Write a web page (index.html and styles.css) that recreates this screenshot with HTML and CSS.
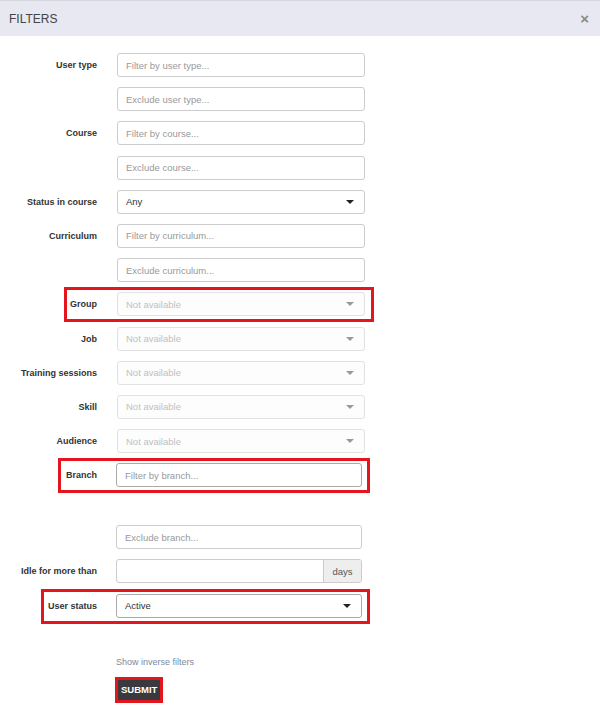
FILE: index.html
```html
<!DOCTYPE html>
<html lang="en">

<head>
    <meta charset="UTF-8">
    <meta name="viewport" content="width=device-width, initial-scale=1.0">
    <title>Filters</title>
    <link rel="stylesheet" href="styles.css">
</head>

<body>
    <div class="modal">
        <div class="modal-head">
            <span class="title">FILTERS</span>
            <span class="close">&times;</span>
        </div>

        <form class="filters">
            <div class="row">
                <label>User type</label>
                <div class="control">Filter by user type...</div>
            </div>
            <div class="row">
                <label></label>
                <div class="control">Exclude user type...</div>
            </div>
            <div class="row">
                <label>Course</label>
                <div class="control">Filter by course...</div>
            </div>
            <div class="row">
                <label></label>
                <div class="control">Exclude course...</div>
            </div>
            <div class="row">
                <label>Status in course</label>
                <div class="control select filled">Any<span class="caret"></span></div>
            </div>
            <div class="row">
                <label>Curriculum</label>
                <div class="control">Filter by curriculum...</div>
            </div>
            <div class="row">
                <label></label>
                <div class="control">Exclude curriculum...</div>
            </div>
            <div class="row marked mark-group">
                <label>Group</label>
                <div class="control select disabled">Not available<span class="caret"></span></div>
            </div>
            <div class="row">
                <label>Job</label>
                <div class="control select disabled">Not available<span class="caret"></span></div>
            </div>
            <div class="row">
                <label>Training sessions</label>
                <div class="control select disabled">Not available<span class="caret"></span></div>
            </div>
            <div class="row">
                <label>Skill</label>
                <div class="control select disabled">Not available<span class="caret"></span></div>
            </div>
            <div class="row">
                <label>Audience</label>
                <div class="control select disabled">Not available<span class="caret"></span></div>
            </div>

            <div class="row shifted marked mark-branch">
                <label>Branch</label>
                <div class="control dark">Filter by branch...</div>
            </div>
            <div class="row shifted spaced">
                <label></label>
                <div class="control">Exclude branch...</div>
            </div>
            <div class="row shifted">
                <label>Idle for more than</label>
                <div class="control group">
                    <span class="field"></span>
                    <span class="addon">days</span>
                </div>
            </div>
            <div class="row shifted marked mark-status">
                <label>User status</label>
                <div class="control select filled dark">Active<span class="caret"></span></div>
            </div>

            <div class="actions">
                <a class="inverse">Show inverse filters</a>
                <span class="submit-wrap">
                    <button type="button" class="submit">SUBMIT</button>
                </span>
            </div>
        </form>
    </div>
</body>

</html>
```

FILE: styles.css
```css
* {
    margin: 0;
    padding: 0;
    box-sizing: border-box;
}

body {
    font-family: "Liberation Sans", Arial, sans-serif;
    background-color: #fff;
    color: #333;
}

.modal {
    width: 600px;
}

.modal-head {
    height: 36px;
    background-color: #e8e8f2;
    border-top: 1px solid #d6d6de;
    display: flex;
    align-items: center;
    justify-content: space-between;
    padding: 0 9px 0 9px;
}

.title {
    font-size: 12px;
    color: #444;
}

.close {
    font-size: 15px;
    font-weight: bold;
    color: #888;
    margin-right: 2px;
}

.filters {
    padding-top: 17px;
}

.row {
    display: flex;
    align-items: center;
    width: 365px;
    height: 24px;
    margin-bottom: 10.2px;
    position: relative;
}

.row label {
    width: 97px;
    text-align: right;
    font-size: 9px;
    font-weight: bold;
    color: #333;
    margin-right: 20px;
}

.control {
    width: 248px;
    height: 24px;
    border: 1px solid #ccc;
    border-radius: 3px;
    font-size: 9.5px;
    color: #999;
    padding-left: 8px;
    display: flex;
    align-items: center;
    background-color: #fff;
}

.control.dark {
    border-color: #aaa;
}

.select {
    padding-right: 10px;
}

.select.filled {
    color: #333;
}

.caret {
    margin-left: auto;
    width: 0;
    height: 0;
    border-top: 4px solid #222;
    border-left: 4px solid transparent;
    border-right: 4px solid transparent;
}

.disabled {
    color: #c0c0c0;
    border-color: #e2e2e2;
    background-color: #fdfdfd;
}

.disabled .caret {
    border-top-color: #999;
}

/* the branch block sits one pixel to the left */
.shifted {
    width: 363px;
}

.shifted label {
    margin-right: 19px;
}

.shifted .control {
    width: 246px;
}

.spaced {
    margin-top: 38px;
}

.group {
    padding: 0;
    overflow: hidden;
}

.field {
    flex: 1;
    height: 100%;
}

.addon {
    width: 38px;
    height: 100%;
    background-color: #eee;
    border-left: 1px solid #ccc;
    color: #555;
    display: flex;
    align-items: center;
    justify-content: center;
}

/* red annotation boxes */
.marked::after {
    content: "";
    position: absolute;
    top: -5px;
    bottom: -6px;
    right: -9px;
    border: 3px solid #e3161f;
}

.mark-group::after {
    left: 64px;
}

.mark-branch::after {
    left: 58px;
    right: -7px;
}

.mark-status::after {
    left: 41px;
    right: -7px;
}

.actions {
    padding-left: 116px;
    padding-top: 29px;
    display: flex;
    flex-direction: column;
    align-items: flex-start;
}

.inverse {
    font-size: 9px;
    color: #7b8a9c;
}

.submit-wrap {
    margin-top: 10px;
    border: 3px solid #e3161f;
    display: inline-block;
    margin-left: -1px;
}

.submit {
    display: block;
    border: none;
    background-color: #3a3a3e;
    color: #fff;
    font-family: "Liberation Sans", Arial, sans-serif;
    font-size: 9.5px;
    font-weight: bold;
    height: 20px;
    padding: 0 3px;
}
```
